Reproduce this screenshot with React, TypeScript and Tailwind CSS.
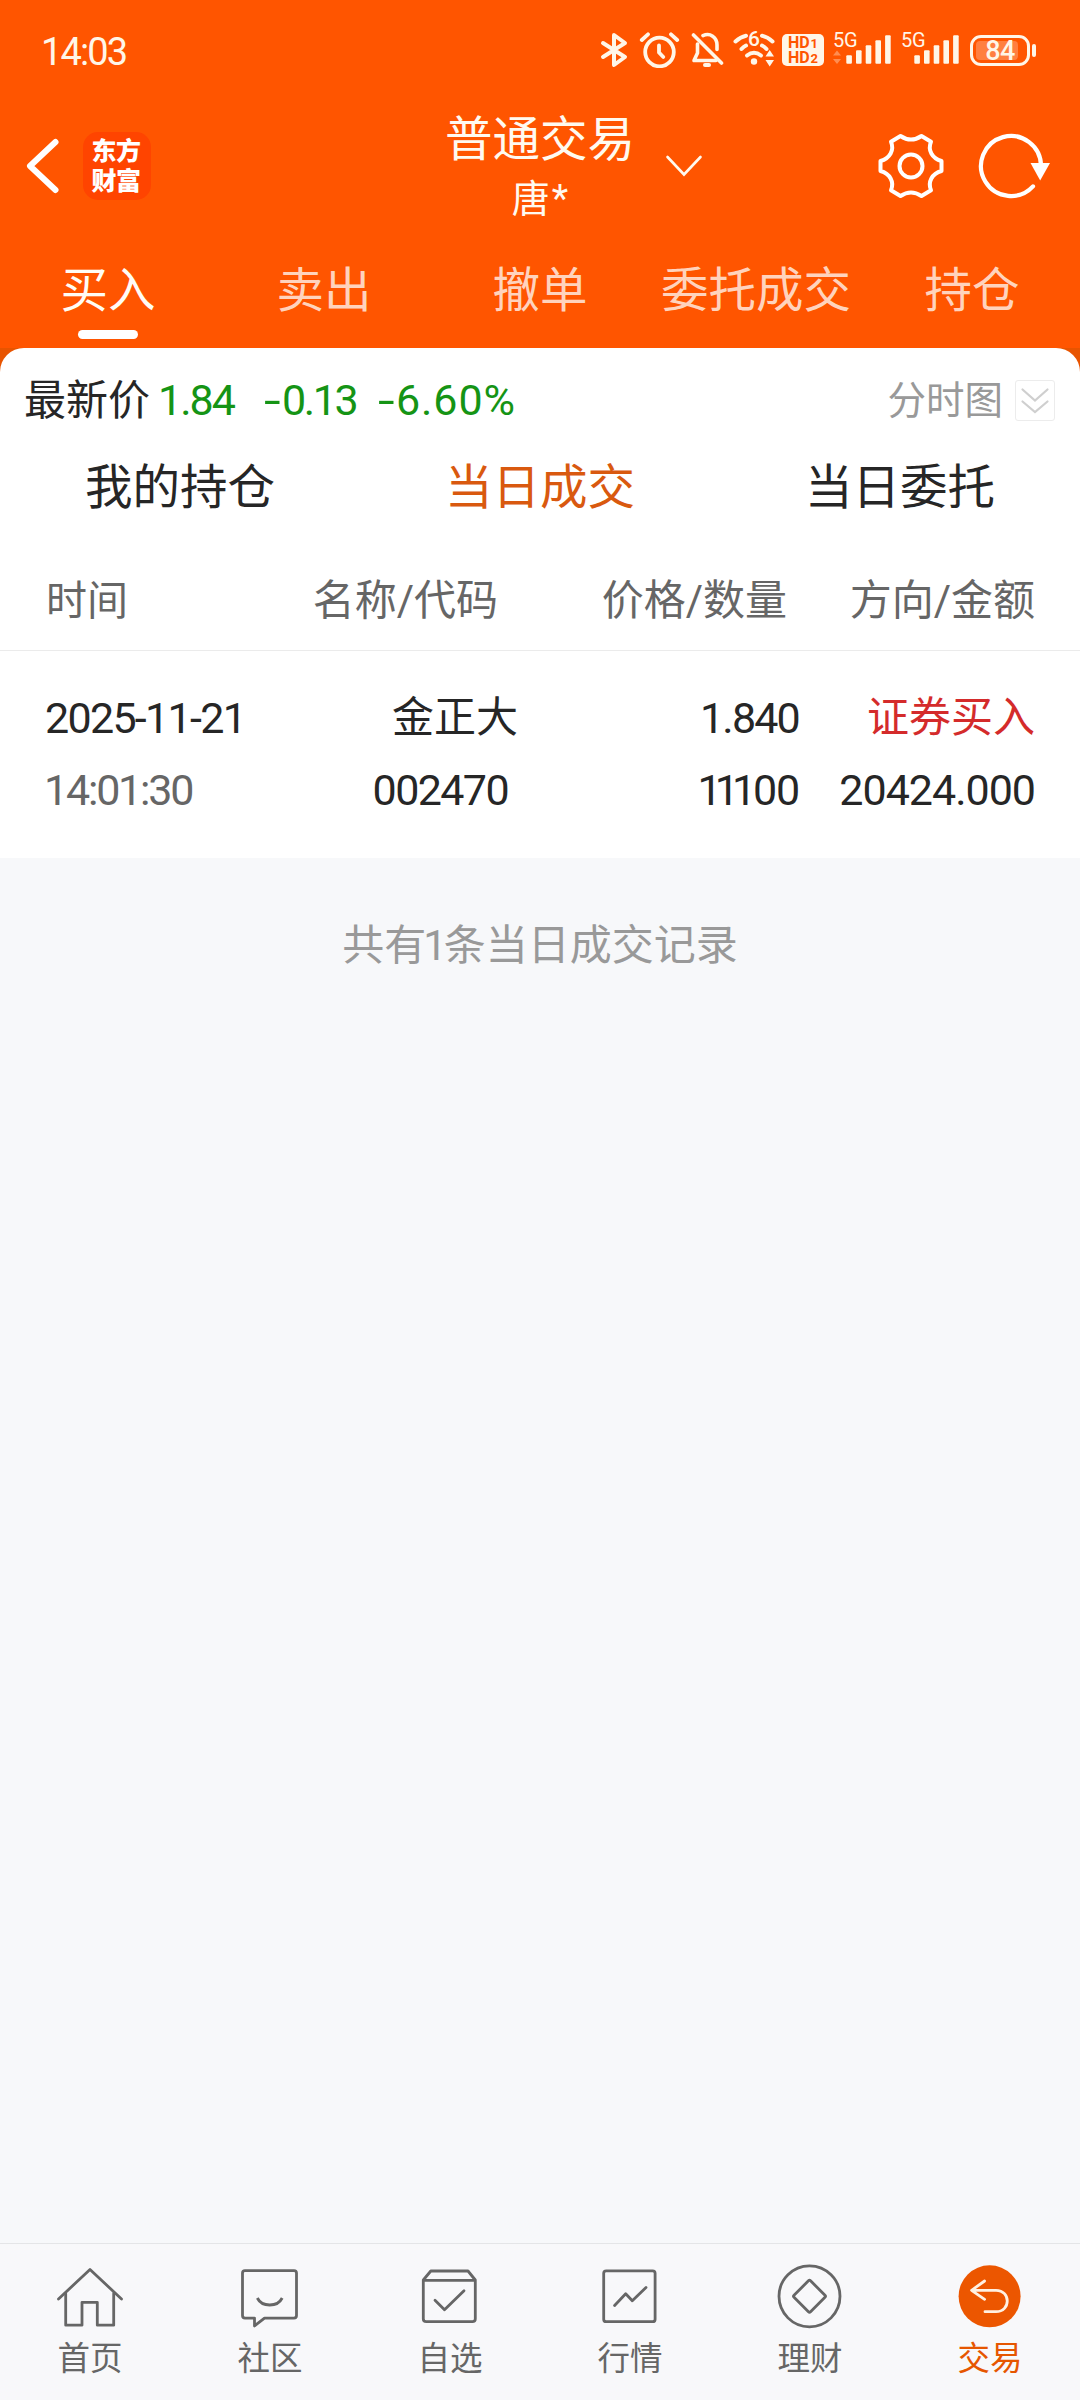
import React, { useState } from 'react';
import clsx from 'clsx';

const MAIN_TABS = ['买入', '卖出', '撤单', '委托成交', '持仓'];
const SUB_TABS = ['我的持仓', '当日成交', '当日委托'];

// Signal bars grow by 5px each
const SIGNAL_BARS = [8.5, 13.5, 18.5, 23.5, 28.5];

interface SignalProps {
    showTraffic?: boolean;
}

const Signal: React.FC<SignalProps> = ({ showTraffic }) => (
    <div className="relative w-[58px] h-[36px]">
        <span className="absolute left-0 -top-px text-[20px] leading-[18px] tracking-[-0.2px]">5G</span>
        <svg className="absolute inset-0" width="58" height="36" viewBox="0 0 58 36" fill="currentColor">
            {showTraffic && (
                <path d="M0 23.5 L4 18.5 L8 23.5Z M0 27 L4 32 L8 27Z" opacity="0.35" />
            )}
            {SIGNAL_BARS.map((height, i) => (
                <rect key={height} x={13.3 + i * 9.7} y={31.8 - height} width="5.6" height={height} rx="1" />
            ))}
        </svg>
    </div>
);

const StatusBar = () => (
    <div className="flex items-center h-[100px] pl-[41px] pr-[44px] text-[#fff6e8]">
        <span className="text-[38px] leading-[40px] tracking-[-1.9px] pt-[3px]">14:03</span>
        <div className="flex items-center ml-auto">
            <svg width="28" height="36" viewBox="0 0 28 36" fill="none" stroke="currentColor" strokeWidth="4" strokeLinejoin="round" strokeLinecap="round">
                <path d="M3 11 L25 25 L14 33 V3 L25 11 L3 25" />
            </svg>
            <svg className="ml-[11px]" width="41" height="36" viewBox="0 0 41 36" fill="none" stroke="currentColor" strokeWidth="3.8" strokeLinecap="round">
                <circle cx="20.5" cy="20" r="14.3" />
                <path d="M2.8 8 L9 2.3 M38.2 8 L32 2.3" />
                <path d="M20 13.5 V20.5 L24.3 25" strokeLinejoin="round" />
            </svg>
            <svg className="ml-[11px]" width="33" height="36" viewBox="0 0 33 36" fill="none" stroke="currentColor" strokeWidth="3.6" strokeLinecap="round" strokeLinejoin="round">
                <path d="M2.5 3 L30.5 31" />
                <path d="M6.5 12 V21 L3 28.5 H25" />
                <path d="M12 3.6 C19 0.5 26 5 26 13 V17.5" />
                <path d="M14 33 H18" strokeWidth="4" />
            </svg>
            <div className="relative ml-[9px] w-[42px] h-[36px]">
                <svg width="42" height="36" viewBox="0 0 42 36" fill="none" stroke="currentColor" strokeWidth="4" strokeLinecap="round">
                    <path d="M2.5 9.5 Q7.5 5 13 3.8 M39.5 9.5 Q34.5 5 29 3.8" />
                    <path d="M8.5 17 Q10.5 14.7 13 13.5 M33.5 17 Q31.5 14.7 29 13.5" />
                    <path d="M14 23.5 Q21 18 28 23.5" />
                    <circle cx="21" cy="29.5" r="3.2" fill="currentColor" stroke="none" />
                    <path d="M32.5 24.5 L36.7 18 L41 24.5Z M32.5 28 L36.7 34.5 L41 28Z" fill="currentColor" stroke="none" />
                </svg>
                <span className="absolute left-[15px] -top-[3px] text-[21px] leading-[20px] font-medium">6</span>
            </div>
            <div className="ml-[7px] w-[42px] h-[32px] rounded-[5px] bg-[#fff6e8] text-[#ff5500] text-[16px] leading-[14px] font-bold pt-[2px] text-center">
                <div>HD<span className="text-[13px] pl-px">1</span></div>
                <div>HD<span className="text-[13px] pl-px">2</span></div>
            </div>
            <div className="ml-[9px] flex gap-[10px]">
                <Signal showTraffic />
                <Signal />
            </div>
            <div className="ml-[11px] flex items-center">
                <div className="w-[60px] h-[31px] rounded-[11px] border-[3px] border-current p-[3px]">
                    <div className="w-[42px] h-full rounded-[4px] bg-white/25 flex items-center justify-center">
                        <span className="text-[27px] leading-[20px] font-medium tracking-[-0.5px] pl-[6px] pt-px">84</span>
                    </div>
                </div>
                <div className="ml-[2px] w-[4px] h-[13px] rounded-[2px] bg-current" />
            </div>
        </div>
    </div>
);

const Header = () => (
    <div className="relative flex h-[140px] items-start justify-between text-white">
        <div className="flex items-center pl-[24px] pt-[32px]">
            <svg width="38" height="68" viewBox="0 0 38 68" fill="none" stroke="currentColor" strokeWidth="6" strokeLinecap="round" strokeLinejoin="round">
                <path d="M31.5 10 L6 34 L31.5 58" />
            </svg>
            <div className="ml-[21px] w-[68px] h-[68px] rounded-[15px] bg-[#ff4400] text-[25px] leading-[30px] font-black text-center pt-[5px] pr-[2px] tracking-[-0.5px]">
                <div>东方</div>
                <div>财富</div>
            </div>
        </div>
        <div className="absolute left-1/2 -translate-x-1/2 top-[13px] flex flex-col items-center text-[#fffaf0]">
            <span className="text-[47.5px] leading-[54px]">普通交易</span>
            <span className="text-[38px] leading-[44px] mt-[10px]">唐<span className="pl-[2px]">*</span></span>
        </div>
        <svg className="absolute left-[664px] top-[52px]" width="40" height="28" viewBox="0 0 40 28" fill="none" stroke="#fffaf0" strokeWidth="2.6" strokeLinecap="round">
            <path d="M3.5 5 L20 22.5 L36.5 5" />
        </svg>
        <div className="flex items-center pr-[28px] pt-[32px] gap-[32px]">
            <svg width="68" height="68" viewBox="0 0 68 68" fill="none" stroke="currentColor" strokeWidth="4" strokeLinejoin="round">
                <path d="M23.5 4 Q34 11 44.5 4 L54 9.8 C50.5 18 55 26.5 64.5 29 V39 C55 41.5 50.5 50 54 58.2 L44.5 64 Q34 57 23.5 64 L14 58.2 C17.5 50 13 41.5 3.5 39 V29 C13 26.5 17.5 18 14 9.8 Z" />
                <circle cx="34" cy="34" r="11.5" />
            </svg>
            <svg width="75" height="68" viewBox="0 0 75 68" fill="none" stroke="currentColor" strokeWidth="4.2" strokeLinecap="round">
                <path d="M64 34 A30 30 0 1 0 56 54.4" />
                <path d="M53.5 31 H73 L63.2 48.5 Z" fill="currentColor" stroke="none" />
            </svg>
        </div>
    </div>
);

interface NavItemProps {
    label: string;
    active?: boolean;
    children: React.ReactNode;
}

const NavItem: React.FC<NavItemProps> = ({ label, active, children }) => (
    <div className={clsx('flex flex-1 flex-col items-center pt-[16px]', active ? 'text-[#e65600]' : 'text-[#666666]')}>
        <svg width="72" height="72" viewBox="0 0 72 72" fill="none" stroke="currentColor" strokeWidth="2.8" strokeLinecap="round" strokeLinejoin="round">
            {children}
        </svg>
        <span className="text-[32.5px] leading-[40px] mt-[7px]">{label}</span>
    </div>
);

const BottomNav = () => (
    <nav className="flex h-[157px] border-t border-[#e4e5e7] bg-[#f8f8fa]">
        <NavItem label="首页">
            <path d="M4.5 39 L36 9.5 L67.5 39" />
            <path d="M11.7 33.5 V65.2 H28 V42.3 H43.3 V65.2 H59.7 V33.5" />
        </NavItem>
        <NavItem label="社区">
            <path d="M11 10.6 H60 Q62.5 10.6 62.5 13.1 V55.6 Q62.5 58.1 60 58.1 H30.5 L20.5 66 V58.1 H11 Q8.5 58.1 8.5 55.6 V13.1 Q8.5 10.6 11 10.6Z" />
            <path d="M23.3 38 C28 47.3 43.5 47.3 48.2 38" strokeLinecap="butt" />
        </NavItem>
        <NavItem label="自选">
            <path d="M9.3 20 L16.8 11 H54 L61.3 20 V58.7 Q61.3 61.7 58.3 61.7 H12.3 Q9.3 61.7 9.3 58.7Z M9.3 20.3 H61.3" />
            <path d="M21 40.2 L30.5 49.8 L50 30.7" />
        </NavItem>
        <NavItem label="行情">
            <rect x="9.7" y="10.8" width="51.4" height="50.9" rx="2.5" />
            <path d="M20.6 45.5 L31.7 33.7 L38.3 40.7 L52 27.5" />
        </NavItem>
        <NavItem label="理财">
            <circle cx="35.5" cy="36.3" r="30.5" />
            <rect x="23.8" y="24.6" width="23.4" height="23.4" rx="1.5" transform="rotate(45 35.5 36.3)" />
        </NavItem>
        <NavItem label="交易" active>
            <circle cx="35.6" cy="36.3" r="31" fill="#ec5600" stroke="none" />
            <path d="M30.6 21 L17.6 30.3 L30.6 39.3 M17.6 30.3 H42 C57 30.3 57 51.7 42 51.7 H31" stroke="#fff1e2" />
        </NavItem>
    </nav>
);

const App = () => {
    const [mainTab, setMainTab] = useState(0);
    const [subTab, setSubTab] = useState(1);

    return (
        <div className="w-[1080px] h-[2400px] flex flex-col bg-[#f7f8fa] font-['Roboto','Noto_Sans_CJK_SC',sans-serif] text-[#262626] whitespace-nowrap overflow-hidden">
            <header className="bg-[#ff5500] h-[348px]">
                <StatusBar />
                <Header />
                <div className="flex h-[108px]">
                    {MAIN_TABS.map((tab, i) => (
                        <button
                            key={tab}
                            onClick={() => setMainTab(i)}
                            className={clsx('flex w-[216px] flex-col items-center pt-[23px] text-[47.5px] leading-[56px]', i === mainTab ? 'text-[#fffcf5]' : 'text-[#ffd3bd]')}
                        >
                            {tab}
                            {i === mainTab && <span className="mt-[11px] w-[60px] h-[9px] rounded-full bg-white" />}
                        </button>
                    ))}
                </div>
            </header>

            <div className="bg-[#e85400]">
                <section className="h-[510px] rounded-t-[24px] bg-white">
                    {/* Latest quote */}
                    <div className="flex items-center h-[104px] pl-[24px] pr-[25px] text-[42px] leading-[48px]">
                        <span className="pt-[2px]">最新价</span>
                        <div className="flex text-[43px] text-[#159415]">
                            <span className="ml-[8px] w-[106px] tracking-[-2px]">1.84</span>
                            <span className="w-[6px] origin-left scale-x-140">-</span>
                            <span className="ml-[12px] w-[96px] tracking-[-2.4px]">0.13</span>
                            <span className="w-[6px] origin-left scale-x-140">-</span>
                            <span className="ml-[12px] tracking-[0.9px]">6.60%</span>
                        </div>
                        <span className="ml-auto pt-px text-[38.5px] text-[#999999]">分时图</span>
                        <div className="ml-[12px] w-[40px] h-[41px] rounded-[3px] border border-[#ececec]">
                            <svg width="38" height="39" viewBox="0 0 38 39" fill="none" stroke="#cfcfcf" strokeWidth="2.2" strokeLinecap="round">
                                <path d="M6.5 8.5 L19 19.5 L31.5 8.5 M6.5 20.5 L19 31 L31.5 20.5" />
                            </svg>
                        </div>
                    </div>

                    <div className="flex h-[76px]">
                        {SUB_TABS.map((tab, i) => (
                            <button
                                key={tab}
                                onClick={() => setSubTab(i)}
                                className={clsx('w-[360px] h-[72px] text-[47.5px] leading-[72px]', i === subTab && 'text-[#d9590f]')}
                            >
                                {tab}
                            </button>
                        ))}
                    </div>

                    {/* Column headings */}
                    <div className="grid grid-cols-[474px_289px_248px] pl-[24px] h-[123px] items-center pt-[24px] text-[42px] leading-[48px] text-[#666666] border-b border-[#ebebeb] text-right">
                        <div className="flex justify-between pl-[22px]">
                            <span className="text-[41px]">时间</span>
                            <span>名称/代码</span>
                        </div>
                        <span>价格/数量</span>
                        <span>方向/金额</span>
                    </div>

                    <div className="pl-[45px] pr-[45px] pt-[43px] text-[43px] leading-[48px]">
                        <div className="grid grid-cols-[473px_281px_236px] text-right">
                            <div className="flex justify-between">
                                <span className="tracking-[-1.7px]">2025-11-21</span>
                                <span className="text-[42px]">金正大</span>
                            </div>
                            <span className="tracking-[-1.8px]">1.840</span>
                            <span className="text-[42px] text-[#d42b2b]">证券买入</span>
                        </div>
                        <div className="mt-[24px] grid grid-cols-[473px_281px_236px] text-right">
                            <div className="flex justify-between pr-[10px] -ml-px">
                                <span className="tracking-[-2.2px] text-[#666666]">14:01:30</span>
                                <span className="tracking-[-1.6px]">002470</span>
                            </div>
                            {/* repeated ones are set tighter than the zeros after them */}
                            <span><span className="tracking-[-7px]">111</span><span className="pl-[4px] tracking-[-1.2px]">00</span></span>
                            <span className="tracking-[-1px]">20424.000</span>
                        </div>
                    </div>
                </section>
            </div>

            <p className="flex-1 pt-[64px] text-center text-[42px] leading-[48px] text-[#999999]">共有<span className="-mx-[3px]">1</span>条当日成交记录</p>

            <BottomNav />
        </div>
    );
};

export default App;
